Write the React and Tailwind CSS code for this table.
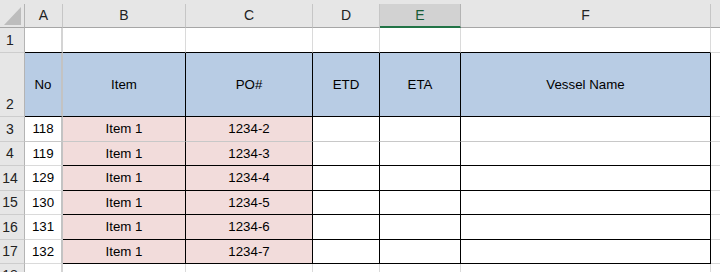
import React from 'react'

const COLS = [
  { id: 'A', w: 'w-[38px]' },
  { id: 'B', w: 'w-[123px]' },
  { id: 'C', w: 'w-[127px]' },
  { id: 'D', w: 'w-[67px]' },
  { id: 'E', w: 'w-[81px]' },
  { id: 'F', w: 'w-[250px]' },
]

const HEAD = ['No', 'Item', 'PO#', 'ETD', 'ETA', 'Vessel Name']

const ROWS = [
  { n: '1', h: 'h-[25px]', kind: 'blank', line: 'black' },
  { n: '2', h: 'h-[64px]', kind: 'head', line: 'black' },
  { n: '3', h: 'h-[25px]', kind: 'data', vals: ['118', 'Item 1', '1234-2'], line: 'grey' },
  { n: '4', h: 'h-[24px]', kind: 'data', vals: ['119', 'Item 1', '1234-3'], line: 'black' },
  { n: '14', h: 'h-[25px]', kind: 'data', vals: ['129', 'Item 1', '1234-4'], line: 'black' },
  { n: '15', h: 'h-[24px]', kind: 'data', vals: ['130', 'Item 1', '1234-5'], line: 'black' },
  { n: '16', h: 'h-[25px]', kind: 'data', vals: ['131', 'Item 1', '1234-6'], line: 'black' },
  { n: '17', h: 'h-[24px]', kind: 'data', vals: ['132', 'Item 1', '1234-7'], line: 'black' },
  { n: '18', h: 'h-[24px]', kind: 'blank', line: 'grey' },
]

function Cell({ row, col, idx }) {
  const inTable = row.kind !== 'blank'
  // vertical line on the right
  let right
  if (idx === 0) right = inTable ? 'border-r-2 border-r-[#c3c3c3]' : 'border-r-2 border-r-[#d4d4d4]'
  else right = inTable ? 'border-r border-r-black' : 'border-r border-r-[#dadada]'

  // horizontal line at the bottom
  let bottom = 'border-b border-b-[#dadada]'
  if (row.line === 'black' && (idx > 0 || row.kind !== 'data')) bottom = 'border-b border-b-black'
  if (row.line === 'grey' && row.kind === 'data') bottom = 'border-b border-b-[#c8c8c8]'

  let bg = 'bg-white'
  let text = ''
  if (row.kind === 'head') {
    bg = 'bg-[#b8cce4]'
    text = HEAD[idx]
  } else if (row.kind === 'data') {
    if (idx === 1 || idx === 2) bg = 'bg-[#f2dcdb]'
    text = row.vals[idx] || ''
  }

  return (
    <div className={`${col.w} shrink-0 flex items-center justify-center text-[13.3px] text-black ${bg} ${right} ${bottom}`}>
      {text}
    </div>
  )
}

export default function App() {
  return (
    <div className="w-[720px] h-[272px] overflow-hidden bg-white font-['Liberation_Sans',Arial,sans-serif] select-none">
      {/* Column headers */}
      <div className="flex items-end h-[28px] bg-[#e6e6e6]">
        <div className="w-[25px] h-[24px] shrink-0 border-r border-r-[#b4b4b4] border-b border-b-[#a6a6a6]">
          <svg width="24" height="23" viewBox="0 0 24 23">
            <polygon points="4,21 21,21 21,3" fill="#bdbdbd" />
          </svg>
        </div>
        {COLS.map((c) =>
          c.id === 'E' ? (
            <div key={c.id} className={`${c.w} h-[24px] shrink-0 flex items-center justify-center text-[14px] text-[#185c37] bg-[#d2d2d2] border-r border-r-[#b4b4b4] border-b-2 border-b-[#217346]`}>
              {c.id}
            </div>
          ) : (
            <div key={c.id} className={`${c.w} h-[24px] shrink-0 flex items-center justify-center text-[14px] text-[#222] border-r border-r-[#c6c6c6] border-b border-b-[#a6a6a6]`}>
              {c.id}
            </div>
          )
        )}
        <div className="flex-1 h-[24px] border-b border-b-[#a6a6a6]" />
      </div>

      {/* Rows */}
      {ROWS.map((row) => (
        <div key={row.n} className={`flex ${row.h}`}>
          <div className="w-[25px] shrink-0 flex items-end justify-center pr-[4px] pb-[1px] text-[14px] text-[#222] bg-[#e6e6e6] border-r border-r-[#b4b4b4] border-b border-b-[#cdcdcd]">
            {row.n}
          </div>
          {COLS.map((c, i) => (
            <Cell key={c.id} row={row} col={c} idx={i} />
          ))}
          <div className="flex-1 border-b border-b-[#dadada]" />
        </div>
      ))}
    </div>
  )
}
